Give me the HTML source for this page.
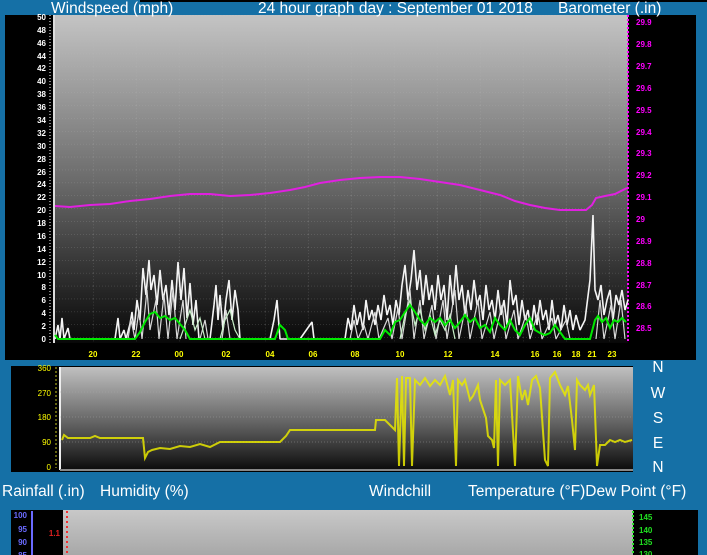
<!DOCTYPE html>
<html><head><meta charset="utf-8"><style>
html,body{margin:0;padding:0;width:707px;height:555px;overflow:hidden;background:#1570a6;}
svg{position:absolute;left:0;top:0}
.t{font-family:"Liberation Sans",sans-serif;fill:#fff;font-size:15.5px}
.yl{font-family:"Liberation Sans",sans-serif;font-size:8px;font-weight:bold;fill:#fff}
.bl{font-family:"Liberation Sans",sans-serif;font-size:8px;font-weight:bold;fill:#ff00ff}
.hl{font-family:"Liberation Sans",sans-serif;font-size:8px;font-weight:bold;fill:#ffff00}
</style></head><body>
<svg width="707" height="555" viewBox="0 0 707 555">
<defs>
<linearGradient id="g1" x1="0" y1="0" x2="0" y2="1"><stop offset="0" stop-color="#c4c4c4"/><stop offset="0.5" stop-color="#6c6c6c"/><stop offset="0.8" stop-color="#2e2e2e"/><stop offset="1" stop-color="#080808"/></linearGradient>
<linearGradient id="g2" x1="0" y1="0" x2="0" y2="1"><stop offset="0" stop-color="#c0c0c0"/><stop offset="0.55" stop-color="#626262"/><stop offset="1" stop-color="#0c0c0c"/></linearGradient>
<linearGradient id="g3" x1="0" y1="0" x2="0" y2="1"><stop offset="0" stop-color="#c8c8c8"/><stop offset="1" stop-color="#a8a8a8"/></linearGradient>
<pattern id="gr" width="43" height="12.9" patternUnits="userSpaceOnUse" x="7" y="2"><path d="M0 0H43M0 0V12.9" stroke="#bbb" stroke-opacity="0.35" stroke-dasharray="1 2" fill="none"/></pattern>
</defs>
<rect x="140" y="0" width="567" height="2" fill="#000"/>
<rect x="5" y="15" width="691" height="345" fill="#000"/>
<rect x="54" y="15" width="574" height="328" fill="url(#g1)"/>
<rect x="54" y="15" width="574" height="328" fill="url(#gr)"/>
<line x1="54" y1="15" x2="54" y2="343" stroke="#ddd" stroke-width="2"/>
<line x1="628" y1="15" x2="628" y2="343" stroke="#ff00ff" stroke-width="2" stroke-dasharray="2 2"/>
<line x1="50" y1="15" x2="50" y2="343" stroke="#fff" stroke-dasharray="1 2"/>
<text class="t" x="51" y="13">Windspeed (mph)</text>
<text class="t" x="258" y="13">24 hour graph day : September 01 2018</text>
<text class="t" x="558" y="13">Barometer (.in)</text>
<g class="yl" text-anchor="end">
<text x="46" y="20">50</text><text x="46" y="33">48</text><text x="46" y="46">46</text><text x="46" y="59">44</text><text x="46" y="71">42</text><text x="46" y="84">40</text><text x="46" y="97">38</text><text x="46" y="110">36</text><text x="46" y="123">34</text><text x="46" y="136">32</text><text x="46" y="149">30</text><text x="46" y="162">28</text><text x="46" y="175">26</text><text x="46" y="187">24</text><text x="46" y="200">22</text><text x="46" y="213">20</text><text x="46" y="226">18</text><text x="46" y="239">16</text><text x="46" y="252">14</text><text x="46" y="265">12</text><text x="46" y="278">10</text><text x="46" y="290">8</text><text x="46" y="303">6</text><text x="46" y="316">4</text><text x="46" y="329">2</text><text x="46" y="342">0</text>
</g>
<g class="bl">
<text x="636" y="25">29.9</text><text x="636" y="47">29.8</text><text x="636" y="69">29.7</text><text x="636" y="91">29.6</text><text x="636" y="113">29.5</text><text x="636" y="135">29.4</text><text x="636" y="156">29.3</text><text x="636" y="178">29.2</text><text x="636" y="200">29.1</text><text x="636" y="222">29</text><text x="636" y="244">28.9</text><text x="636" y="266">28.8</text><text x="636" y="288">28.7</text><text x="636" y="309">28.6</text><text x="636" y="331">28.5</text>
</g>
<g class="hl" text-anchor="middle">
<text x="93" y="357">20</text><text x="136" y="357">22</text><text x="179" y="357">00</text><text x="226" y="357">02</text><text x="270" y="357">04</text><text x="313" y="357">06</text><text x="355" y="357">08</text><text x="400" y="357">10</text><text x="448" y="357">12</text><text x="495" y="357">14</text><text x="535" y="357">16</text><text x="557" y="357">16</text><text x="576" y="357">18</text><text x="592" y="357">21</text><text x="612" y="357">23</text>
</g>
<g fill="none" stroke-linejoin="bevel">
<path d="M55 339L58 325L60 339L62 318L64 339L68 328L70 339L115 339L118 318L120 339L124 330L126 339L130 324L132 312L134 330L137 300L140 320L143 268L146 295L149 260L151 290L154 275L157 305L160 270L163 300L166 285L169 315L172 280L175 310L178 262L181 300L184 268L187 318L190 283L193 325L196 300L199 339L210 339L214 305L216 285L218 320L220 295L223 330L226 300L229 280L232 320L235 290L238 310L240 339L270 339L274 320L277 300L280 339L290 339L300 339L312 322L314 339L345 339L348 318L351 330L354 305L357 325L360 312L363 330L366 300L369 320L372 310L375 325L378 305L381 320L384 295L387 315L390 305L393 325L396 300L399 315L402 285L405 265L408 300L411 280L414 250L417 290L420 270L423 305L426 275L429 300L432 285L435 310L438 275L441 300L444 285L447 320L450 275L453 305L456 265L459 300L462 285L465 315L468 290L471 310L474 280L477 305L480 295L483 320L486 285L489 310L492 300L495 320L498 290L501 315L504 300L507 325L510 280L513 305L516 295L519 325L522 300L525 320L528 310L531 330L534 305L537 325L540 300L543 320L546 310L549 330L552 300L555 325L558 315L561 330L564 305L567 325L570 310L573 330L576 315L580 330L585 320L590 280L593 215L595 290L598 300L601 285L604 315L607 300L610 290L613 320L616 295L619 305L622 290L625 310L628 300" stroke="#f4f4f4" stroke-width="1.6"/>
<path d="M128 339L131 320L135 339L139 310L142 339L147 290L150 330L156 300L159 339L164 295L168 339L173 290L177 339L183 300L186 339M200 339L205 320L208 339L222 339L226 310L230 339M350 339L354 320L358 339L364 325L368 339L375 312L379 339L388 318L392 339L398 308L402 339L410 290L414 339L420 300L424 339L432 305L436 339L443 300L447 339L455 290L459 339L466 305L470 339L478 300L482 339L490 312L494 339L502 305L506 339L514 310L518 339L526 315L530 339L538 312L542 339L552 318L556 339L566 320L570 339M596 339L600 300L604 339L611 305L615 339L621 300L625 339" stroke="#d8d8d8" stroke-width="1.2"/>
</g>
<path d="M180 339L185 325L190 310L195 330L200 318L205 339M220 339L225 320L230 310L235 330L240 339M400 339L405 315L410 300L415 325L420 310L425 330L430 315L435 335L440 320L445 330L450 315L455 339" fill="none" stroke="#c8f0c8" stroke-width="1.2"/>
<path d="M55 335L58 339L135 339L140 332L145 322L150 314L155 312L160 318L165 316L170 320L175 318L180 324L185 330L190 339L275 339L280 325L285 330L288 339L380 339L385 330L390 335L395 322L400 320L405 312L410 305L415 312L420 320L425 325L430 318L435 322L440 318L445 325L450 320L455 328L460 322L465 315L470 322L475 318L480 328L485 325L490 332L495 318L500 325L505 330L510 320L515 330L520 335L525 325L530 318L535 330L540 333L545 335L550 333L555 325L560 332L565 339L590 339L595 320L598 316L602 322L606 318L610 328L614 320L618 322L622 318L626 322" fill="none" stroke="#00e800" stroke-width="2"/>
<path d="M55 206L70 207L90 205L110 204L130 201L150 199L170 196L190 194L210 194L230 196L250 195L270 193L290 190L305 187L320 183L340 180L360 178L380 177L400 177L420 179L440 182L460 185L480 190L500 195L515 201L530 205L545 208L560 210L575 210L586 210L592 205L596 198L605 196L615 194L627 188" fill="none" stroke="#e020e0" stroke-width="2"/>
<rect x="11" y="366" width="622" height="106" fill="#000"/>
<rect x="60" y="367" width="573" height="103" fill="url(#g2)"/>
<line x1="60" y1="367" x2="60" y2="470" stroke="#eee" stroke-width="2"/>
<line x1="60" y1="470" x2="633" y2="470" stroke="#888" stroke-width="2"/>
<line x1="56" y1="367" x2="56" y2="468" stroke="#c8c820" stroke-dasharray="2 2"/>
<g stroke="#aaa" stroke-opacity="0.4" stroke-dasharray="1 2"><line x1="60" y1="392" x2="633" y2="392"/><line x1="60" y1="417" x2="633" y2="417"/><line x1="60" y1="442" x2="633" y2="442"/></g>
<g class="hl" text-anchor="end" style="font-weight:normal">
<text x="51" y="371">360</text><text x="51" y="396">270</text><text x="51" y="420">180</text><text x="51" y="445">90</text><text x="51" y="470">0</text>
</g>
<path d="M62 440L64 435L68 438L90 438L95 436L100 438L143 438L145 458L148 452L152 450L160 448L170 449L180 446L190 447L200 444L210 447L220 442L240 442L260 442L280 442L286 436L290 430L300 430L340 430L375 430L376 420L385 420L395 430L397 378L399 466L402 376L404 466L406 378L410 378L412 466L415 380L420 385L425 378L430 386L435 380L440 385L445 376L450 395L453 380L456 466L458 380L462 385L465 380L470 400L473 396L478 385L480 400L486 418L488 436L492 440L494 448L496 380L498 466L500 380L505 385L510 380L515 466L518 376L522 400L525 390L528 405L532 380L536 376L540 388L545 460L548 466L550 378L555 372L560 385L565 395L568 386L572 420L575 450L577 380L580 385L585 390L588 385L590 395L594 385L597 466L600 445L605 445L610 440L615 442L620 440L625 442L632 440" fill="none" stroke="#e8e800" stroke-width="2" stroke-opacity="0.85"/>
<g class="t" text-anchor="middle">
<text x="658" y="372">N</text><text x="658" y="398">W</text><text x="658" y="423">S</text><text x="658" y="448">E</text><text x="658" y="472">N</text>
</g>
<text class="t" x="2" y="496">Rainfall (.in)</text>
<text class="t" x="100" y="496">Humidity (%)</text>
<text class="t" x="369" y="496">Windchill</text>
<text class="t" x="468" y="496">Temperature (°F)Dew Point (°F)</text>
<rect x="11" y="510" width="687" height="45" fill="#000"/>
<rect x="63" y="510" width="570" height="45" fill="url(#g3)"/>
<line x1="32" y1="511" x2="32" y2="555" stroke="#6a6aff" stroke-width="2"/>
<line x1="67" y1="511" x2="67" y2="555" stroke="#f03030" stroke-dasharray="2 3" stroke-width="2"/>
<line x1="633" y1="511" x2="633" y2="555" stroke="#30e030" stroke-dasharray="2 2" stroke-width="2"/>
<g style="font-family:'Liberation Sans',sans-serif;font-size:8px;font-weight:bold" fill="#6a6aff" text-anchor="end">
<text x="27" y="518">100</text><text x="27" y="532">95</text><text x="27" y="545">90</text><text x="27" y="558">85</text>
</g>
<text x="60" y="536" style="font-family:'Liberation Sans',sans-serif;font-size:8px;font-weight:bold" fill="#e02020" text-anchor="end">1.1</text>
<g style="font-family:'Liberation Sans',sans-serif;font-size:8px;font-weight:bold" fill="#20e020">
<text x="639" y="520">145</text><text x="639" y="533">140</text><text x="639" y="545">135</text><text x="639" y="557">130</text>
</g>
</svg>
</body></html>
